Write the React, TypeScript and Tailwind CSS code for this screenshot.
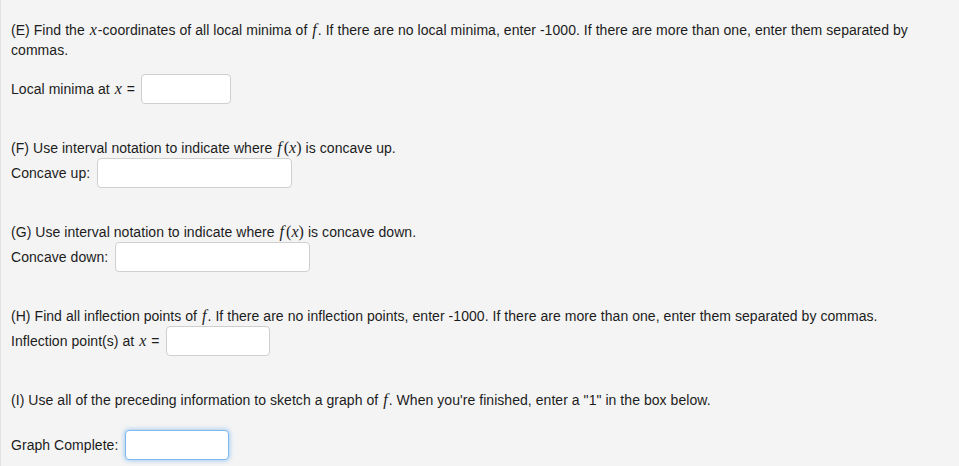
import React from "react";

function MathVar({ children }: { children: React.ReactNode }) {
  return (
    <span className="italic text-[16px] leading-[16px] px-[1px]" style={{ fontFamily: '"Liberation Serif", serif' }}>
      {children}
    </span>
  );
}

function Fx() {
  return (
    <span className="text-[16px] leading-[16px] pl-[1px]" style={{ fontFamily: '"Liberation Serif", serif' }}>
      <i className="pr-[2px]">f</i>(<i>x</i>)
    </span>
  );
}

function Box({ width, focus }: { width: string; focus?: boolean }) {
  return (
    <input
      type="text"
      className={
        focus
          ? `${width} h-[30px] rounded-[4px] border border-[#7db9f0] bg-white shadow-[0_0_4px_1px_rgba(110,175,240,0.55)] outline-none`
          : `${width} h-[30px] rounded-[4px] border border-[#cfcfcf] bg-white outline-none`
      }
    />
  );
}

export default function App() {
  return (
    <div
      className="min-h-[466px] w-full bg-[#f4f4f4] border-l border-[#e2e2e2] pl-[10px] pr-4 pt-[20px] text-[14px] leading-[20px] tracking-[0.05px] text-[#1c1c1c]"
      style={{ fontFamily: '"Liberation Sans", Arial, sans-serif' }}
    >
      <p>
        (E) Find the <MathVar>x</MathVar>-coordinates of all local minima of <MathVar>f</MathVar>. If there are
        no local minima, enter -1000. If there are more than one, enter them separated by commas.
      </p>
      <div className="mt-[14px] flex items-center gap-[6px]">
        <span>
          Local minima at <MathVar>x</MathVar> =
        </span>
        <Box width="w-[90px]" />
      </div>

      <p className="mt-[34px]">
        (F) Use interval notation to indicate where <Fx /> is concave up.
      </p>
      <div className="flex items-center gap-[7px]">
        <span>Concave up:</span>
        <Box width="w-[195px]" />
      </div>

      <p className="mt-[34px]">
        (G) Use interval notation to indicate where <Fx /> is concave down.
      </p>
      <div className="flex items-center gap-[7px]">
        <span>Concave down:</span>
        <Box width="w-[195px]" />
      </div>

      <p className="mt-[34px]">
        (H) Find all inflection points of <MathVar>f</MathVar>. If there are no inflection points, enter -1000.
        If there are more than one, enter them separated by commas.
      </p>
      <div className="flex items-center gap-[6px]">
        <span>
          Inflection point(s) at <MathVar>x</MathVar> =
        </span>
        <Box width="w-[104px]" />
      </div>

      <p className="mt-[34px]">
        (I) Use all of the preceding information to sketch a graph of <MathVar>f</MathVar>. When you're
        finished, enter a "1" in the box below.
      </p>
      <div className="mt-[20px] flex items-center gap-[7px]">
        <span>Graph Complete:</span>
        <Box width="w-[104px]" focus />
      </div>
    </div>
  );
}
